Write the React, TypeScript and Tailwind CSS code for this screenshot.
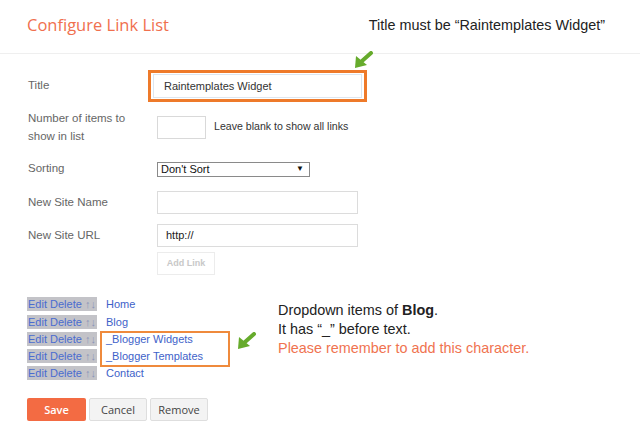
import React from "react";

const Arrow = ({ className }: { className: string }) => (
  <svg className={className} viewBox="0 0 20 18" width="20" height="18">
    <line x1="17" y1="2" x2="8" y2="10" stroke="#66ab2c" strokeWidth="4" strokeLinecap="round" />
    <polygon points="1,17 2,5 13,14" fill="#66ab2c" />
  </svg>
);

const links = ["Home", "Blog", "_Blogger Widgets", "_Blogger Templates", "Contact"];

export default function App() {
  return (
    <div className="relative w-[640px] h-[443px] bg-white overflow-hidden" style={{ fontFamily: '"Liberation Sans", Arial, sans-serif' }}>
      <div className="h-[54px] border-b border-[#efefef] flex items-center justify-between pl-[27px] pr-[35px] pb-[2px]">
        <div className="text-[16.5px] text-[#f0704e]" style={{ fontFamily: '"Open Sans", sans-serif' }}>Configure Link List</div>
        <div className="text-[14.4px] text-[#222]">Title must be “Raintemplates Widget”</div>
      </div>
      <Arrow className="absolute left-[354px] top-[51px]" />

      <div className="pl-[28px] text-[11.5px] text-[#666]">
        <div className="flex items-center h-[32px] mt-[16px]">
          <div className="w-[120px]">Title</div>
          <div className="w-[219px] h-[32px] border-[3px] border-[#ee7a2a] flex items-center px-[2px]">
            <div className="w-full h-[24px] border border-[#dde6f0] flex items-center pl-[10px] text-[11px] text-[#333]">Raintemplates Widget</div>
          </div>
        </div>

        <div className="flex items-center h-[36px] mt-[7px]">
          <div className="w-[129px] leading-[18px]">Number of items to<br />show in list</div>
          <div className="w-[49px] h-[23px] border border-[#d9d9d9]" />
          <div className="ml-[8px] text-[10.6px] text-[#333]">Leave blank to show all links</div>
        </div>

        <div className="flex items-center h-[18px] mt-[15px]">
          <div className="w-[129px]">Sorting</div>
          <div className="w-[153px] h-[15px] border border-[#8a8a8a] flex items-center justify-between pl-[3px] pr-[5px] text-[11px] text-[#111]">
            <span>Don't Sort</span>
            <span className="text-[8px]">▼</span>
          </div>
        </div>

        <div className="flex items-center h-[23px] mt-[13px]">
          <div className="w-[129px]">New Site Name</div>
          <div className="w-[201px] h-[23px] border border-[#dcdcdc]" />
        </div>

        <div className="flex items-center h-[23px] mt-[10px]">
          <div className="w-[129px]">New Site URL</div>
          <div className="w-[201px] h-[23px] border border-[#dcdcdc] flex items-center pl-[8px] text-[11px] text-[#222]">http://</div>
        </div>

        <div className="flex items-center h-[23px] mt-[5px]">
          <div className="w-[129px]" />
          <div className="w-[58px] h-[23px] border border-[#ececec] flex items-center justify-center text-[9px] font-bold text-[#c8c8c8]">Add Link</div>
        </div>
      </div>

      <div className="relative flex pl-[27px] mt-[21px]">
        <div className="flex flex-col">
          {links.map((l) => (
            <div key={l} className="flex items-center h-[17.25px] text-[11px]">
              <div className="w-[79px]">
                <span className="bg-[#c3c3c8] text-[#4a6cd0] px-[1px] py-[1px]">Edit Delete <span className="text-[#8a94b8]">↑↓</span></span>
              </div>
              <span className="text-[#3e62c9]">{l}</span>
            </div>
          ))}
        </div>
        <div className="ml-[75px] mt-[5px] text-[14.4px] leading-[19px] text-[#222]">
          <div>Dropdown items of <b>Blog</b>.</div>
          <div>It has “_” before text.</div>
          <div className="text-[#f07350]">Please remember to add this character.</div>
        </div>
        <div className="absolute left-[100px] top-[35px] w-[130px] h-[36px] border-2 border-[#ef8a3c]" />
        <Arrow className="absolute left-[237px] top-[36px]" />
      </div>

      <div className="flex gap-[3px] pl-[27px] mt-[16px] text-[11px]" style={{ fontFamily: '"Open Sans", sans-serif' }}>
        <div className="w-[59px] h-[23px] rounded-[2px] bg-[#f36b43] text-white font-semibold flex items-center justify-center">Save</div>
        <div className="w-[58px] h-[23px] rounded-[2px] bg-[#f3f3f3] border border-[#dedede] text-[#444] flex items-center justify-center">Cancel</div>
        <div className="w-[58px] h-[23px] rounded-[2px] bg-[#f3f3f3] border border-[#dedede] text-[#444] flex items-center justify-center">Remove</div>
      </div>
    </div>
  );
}
